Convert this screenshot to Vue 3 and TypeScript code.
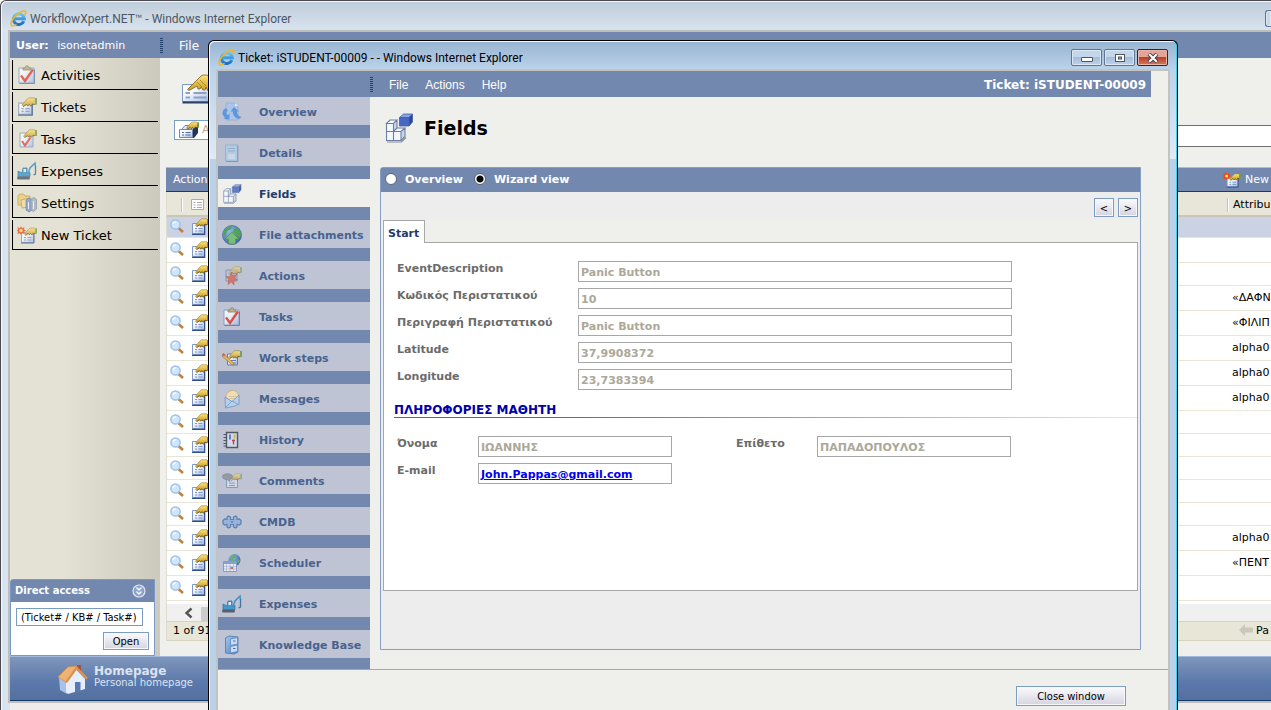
<script setup lang="ts">
import { ref } from 'vue'

interface NavItem {
  label: string
  icon: string
}

interface Field {
  id: string
  label: string
  value: string
}

interface TicketRow {
  attribute: string
  tall: boolean
}

const sideMenu: NavItem[] = [
  { label: 'Activities', icon: 'clipboard' },
  { label: 'Tickets', icon: 'ticket' },
  { label: 'Tasks', icon: 'task' },
  { label: 'Expenses', icon: 'excavator' },
  { label: 'Settings', icon: 'settings' },
  { label: 'New Ticket', icon: 'new-ticket' },
]

const ticketNav: NavItem[] = [
  { label: 'Overview', icon: 'overview' },
  { label: 'Details', icon: 'details' },
  { label: 'Fields', icon: 'cubes' },
  { label: 'File attachments', icon: 'globe' },
  { label: 'Actions', icon: 'actions' },
  { label: 'Tasks', icon: 'clipboard' },
  { label: 'Work steps', icon: 'steps' },
  { label: 'Messages', icon: 'message' },
  { label: 'History', icon: 'notebook' },
  { label: 'Comments', icon: 'comments' },
  { label: 'CMDB', icon: 'puzzle' },
  { label: 'Scheduler', icon: 'scheduler' },
  { label: 'Expenses', icon: 'excavator' },
  { label: 'Knowledge Base', icon: 'cabinet' },
]

const activeNav = ref('Fields')
const view = ref('wizard')
const directAccess = ref('(Ticket# / KB# / Task#)')

const eventFields: Field[] = [
  { id: 'event-description', label: 'EventDescription', value: 'Panic Button' },
  { id: 'event-code', label: 'Κωδικός Περιστατικού', value: '10' },
  { id: 'event-detail', label: 'Περιγραφή Περιστατικού', value: 'Panic Button' },
  { id: 'latitude', label: 'Latitude', value: '37,9908372' },
  { id: 'longitude', label: 'Longitude', value: '23,7383394' },
]

const rows: TicketRow[] = [
  { attribute: '', tall: false },
  { attribute: '', tall: true },
  { attribute: '', tall: false },
  { attribute: '«ΔΑΦΝ', tall: true },
  { attribute: '«ΦΙΛΙΠ', tall: true },
  { attribute: 'alpha0', tall: true },
  { attribute: 'alpha0', tall: true },
  { attribute: 'alpha0', tall: true },
  { attribute: '', tall: false },
  { attribute: '', tall: false },
  { attribute: '', tall: false },
  { attribute: '', tall: false },
  { attribute: '', tall: false },
  { attribute: 'alpha0', tall: true },
  { attribute: '«ΠΕΝΤ', tall: true },
  { attribute: '', tall: true },
]
</script>

<template>
  <svg class="sprite" width="0" height="0" aria-hidden="true">
    <defs>
      <linearGradient id="g-paper" x1="0" y1="0" x2="1" y2="1">
        <stop offset="0" stop-color="#ffffff" />
        <stop offset=".4" stop-color="#f2f6fd" />
        <stop offset="1" stop-color="#9fb6e2" />
      </linearGradient>
      <linearGradient id="g-hand" x1="0" y1="0" x2="0" y2="1">
        <stop offset="0" stop-color="#fbe27a" />
        <stop offset="1" stop-color="#c9971f" />
      </linearGradient>
      <linearGradient id="g-ie" x1="0" y1="0" x2="0" y2="1">
        <stop offset="0" stop-color="#6cc8f5" />
        <stop offset="1" stop-color="#1a6fc4" />
      </linearGradient>
      <radialGradient id="g-globe" cx=".35" cy=".3" r=".8">
        <stop offset="0" stop-color="#8ab8ea" />
        <stop offset="1" stop-color="#1f4f9c" />
      </radialGradient>
      <linearGradient id="g-blue" x1="0" y1="0" x2="1" y2="1">
        <stop offset="0" stop-color="#9cc6f2" />
        <stop offset="1" stop-color="#3c78c4" />
      </linearGradient>
    </defs>
    <symbol id="ie" viewBox="0 0 18 18">
      <path d="M14.6 11.8a5.700 5.700 0 1 1 .4-2.600H5.400" fill="none" stroke="url(#g-ie)" stroke-width="3.200" />
      <path d="M3.200 9.300h13" stroke="#3f9fe2" stroke-width="2.200" />
      <path d="M1.800 16.500C-.5 14.500 2.800 8 8.500 3.800 12.500.9 16.200.2 16.700 2c.2.900-.2 2-.9 3.200" fill="none" stroke="#f2b51c" stroke-width="1.700" stroke-linecap="round" />
      <path d="M1.800 16.500c.9.800 2.800.2 4.600-1" fill="none" stroke="#f2b51c" stroke-width="1.500" stroke-linecap="round" />
    </symbol>
    <symbol id="clipboard" viewBox="0 0 20 20">
      <path d="M2 3h15v15H2z" fill="url(#g-paper)" stroke="#8098c4" />
      <path d="M2.500 18.500h15v-14" fill="none" stroke="#5f79ac" />
      <path d="M6 5V3h2c0-3 4-3 4 0h2v2z" fill="#b7ac83" stroke="#857a55" stroke-width=".8" />
      <path d="M4 10.500l4 5.500L16 4.500" fill="none" stroke="#e03a2c" stroke-width="2.300" />
    </symbol>
    <symbol id="hand" viewBox="0 0 14 9">
      <path d="M.3 7.500L4 3 6.500 1H12v5.500l-2-.5-1.500 2-1.500-1-1.500 1-1-1.200L1.500 8.500z" fill="url(#g-hand)" />
      <path d="M.3 7.500L4 3 6.500.8H12" fill="none" stroke="#a88428" stroke-width=".7" />
      <path d="M1.500 8.700l3-2 1 1.300 1.500-1.200L8.500 8.200 10 6.300l2 .5" fill="none" stroke="#5b4716" stroke-width=".9" />
      <path d="M12 1h2v6h-2z" fill="#6f9c4a" />
    </symbol>
    <symbol id="ticket" viewBox="0 0 18 18">
      <path d="M1.500 5.500h12v10h-12z" fill="url(#g-paper)" stroke="#8098c6" />
      <path d="M1 16.300h12.700V6" fill="none" stroke="#304f88" stroke-width="1.200" />
      <path d="M4 10.500h2M7.500 10.500h4M4 13h2M7.500 13h4" stroke="#7f96c4" stroke-width="1.100" />
      <use href="#hand" x="4" y="0" width="14" height="9" />
    </symbol>
    <symbol id="big-ticket" viewBox="0 0 34 32">
      <path d="M1.500 10.500h29v17h-29z" fill="url(#g-paper)" stroke="#7f97c6" />
      <path d="M1.500 28.500h30V11" fill="none" stroke="#2b4068" stroke-width="1.800" />
      <path d="M4.500 19h4.500M12.500 19h13M4.500 23.500h4.500M12.500 23.500h13" stroke="#8ca0c8" stroke-width="1.800" />
      <path d="M7 15l8-8 5-5c3-2 7-1 14 2v14l-7-1-2-4-1 3h-2l-2-3-1 2h-2l-1-3-7 4c-2 .500-3-.300-2-1z" fill="url(#g-hand)" stroke="#8a6a1e" stroke-width=".9" />
      <path d="M16 8l5 5M19 6l6 6" fill="none" stroke="#a27d22" stroke-width=".8" />
    </symbol>
    <symbol id="task" viewBox="0 0 20 20">
      <path d="M3 4h13v14H3z" fill="url(#g-paper)" stroke="#8098c4" />
      <path d="M5 12l3 4.500 5.500-8" fill="none" stroke="#dd4433" stroke-width="2" />
      <use href="#hand" x="6" y="0" width="14" height="9" />
    </symbol>
    <symbol id="excavator" viewBox="0 0 20 20">
      <path d="M1 10l4 2 1-5h4v5l3-.500v4L1 16z" fill="#2f93cc" stroke="#1e5d8c" stroke-width=".7" />
      <path d="M6.500 8h2.500v3h-2.500z" fill="#e2f2fb" />
      <path d="M1.500 17h10" stroke="#44505c" stroke-width="3" stroke-linecap="round" />
      <path d="M11 12.500L13 7l5-5 .5 4" fill="none" stroke="#2a8ac8" stroke-width="1.500" />
      <path d="M18.500 5v8l-2 1" fill="none" stroke="#39648c" stroke-width="1.300" />
    </symbol>
    <symbol id="settings" viewBox="0 0 20 20">
      <path d="M1 3l1.500-2h4L8 3h5v9H1z" fill="#efcb75" stroke="#b98d39" stroke-width=".8" />
      <path d="M4 7l8-2v9l-7 1z" fill="#f7dd99" stroke="#b98d39" stroke-width=".8" />
      <path d="M9 7l3-2 3 2v10l-3 2-3-2z" fill="#7698d2" stroke="#43659f" stroke-width=".7" />
      <path d="M14 6l3-1.500 2.500 2V16l-3 2.500L14 17z" fill="#a4afc3" stroke="#667591" stroke-width=".7" />
      <path d="M11.500 9v7M16.500 8v8" stroke="#e9f0fa" />
    </symbol>
    <symbol id="new-ticket" viewBox="0 0 20 18">
      <path d="M4.500 6.500h12v10h-12z" fill="url(#g-paper)" stroke="#8098c6" />
      <path d="M4 17h13V7" fill="none" stroke="#304f88" />
      <path d="M7 11.500h2M10.500 11.500h4M7 14h2M10.500 14h4" stroke="#7f96c4" stroke-width="1.100" />
      <use href="#hand" x="7" y="1" width="13" height="9" />
      <path d="M4 0l1 2.200L7.500 1 7 3.500 9 4.500 7 5.600l.5 2.400L5 7.200 4 9 3 7.200.5 8 1 5.600-.5 4.500 1 3.500.5 1 3 2.200z" fill="#f0441c" />
      <circle cx="4" cy="4.500" r="1.800" fill="#ffdf45" />
    </symbol>
    <symbol id="search" viewBox="0 0 14 14">
      <path d="M8.500 9l4.500 4" stroke="#c0813e" stroke-width="2.600" />
      <circle cx="5.500" cy="5.500" r="4.600" fill="#cfe6fb" stroke="#9fc2ea" stroke-width="1.500" />
      <path d="M3 5a2.500 2.500 0 0 1 3-2" fill="none" stroke="#fff" stroke-width="1.200" />
    </symbol>
    <symbol id="overview" viewBox="0 0 20 20">
      <path d="M4 1h9l3 3v14H4z" fill="#a9c5ee" stroke="#8ba9d8" stroke-width=".8" />
      <path d="M13 1v3h3" fill="#e8f1fc" />
      <path d="M4 6C-.5 8.500-.5 13 3 15.500l-1.500 1.300 6 .8V11.500l-1.700 1.700C4 12 4 9.500 6 8.500z" fill="#4f91dc" />
      <path d="M12 5L8.500 9.500h2.300c0 3.500 2 6.500 6.200 7.500l2.700-2c-3.500-.800-4.800-3-4.800-5.500h2.100z" fill="#4f91dc" />
    </symbol>
    <symbol id="details" viewBox="0 0 20 20">
      <path d="M3.500 2h12v16h-12z" fill="#b0cde6" stroke="#92b0cc" />
      <path d="M6 5.500h7M6 8h7" stroke="#8fb0d0" stroke-width="1.200" />
      <path d="M6 11h7v5H6z" fill="#c9ddee" />
      <path d="M15.800 2.500v16H4" fill="none" stroke="#7393b6" />
    </symbol>
    <symbol id="cubes" viewBox="0 0 28 30">
      <path d="M1.500 10.500L5 7h7v8h8v8.500L16 27.500H1.500z" fill="#f3f7fc" />
      <path d="M8.500 10.500L12 7v8l-3.500 3.500zM16 18.500l4-3.500v8.500l-4 4z" fill="#c9d5e8" />
      <path d="M1.500 10.500L5 7h7L8.500 10.500zM1.500 10.500v17H16v-9H1.500M8.500 10.500v17M12 7v8l-3.500 3.500M12 15h8l-4 3.500M20 15v8.500l-4 4" fill="none" stroke="#6c80a6" stroke-width="1.100" />
      <path d="M2 29h14.500l4.500-4.500" fill="none" stroke="#858c99" stroke-width="1.200" />
      <path d="M14.500 4.500L18.500 1h9L24 4.500z" fill="#87a5e2" stroke="#4660a4" stroke-width=".8" />
      <path d="M24 4.500L27.500 1v8L24 13z" fill="#2a4693" stroke="#4660a4" stroke-width=".8" />
      <path d="M14.500 4.500H24V13h-9.500z" fill="#4668c4" stroke="#4660a4" stroke-width=".8" />
    </symbol>
    <symbol id="globe" viewBox="0 0 20 20">
      <circle cx="10" cy="10" r="9.500" fill="url(#g-globe)" stroke="#2c5c87" stroke-width=".7" />
      <path d="M2 6c2-3 5-5 8-5l-1 3-4 2-1 4-3 2zM13 2l5 4 1 4-2 3-3-4-3-2z" fill="#3f9e48" />
      <path d="M10 7l7 7h-3.500v4.500a9 9 0 0 1-7 0V14H3z" fill="#6fbc68" stroke="#3d8640" stroke-width=".7" />
    </symbol>
    <symbol id="actions" viewBox="0 0 20 20">
      <path d="M4 4h11v11H4z" fill="#b7c4dd" stroke="#7b8fb4" />
      <use href="#hand" x="6" y="0" width="14" height="9" opacity=".6" />
      <path d="M9.500 6l1.200 4 4-1.700-2 3.700 2.800 2-3.500.3L12 19l-2.500-3L6 18.500l.7-5L4 10.500l4 .3z" fill="#d96a55" stroke="#b14c3e" stroke-width=".5" />
    </symbol>
    <symbol id="steps" viewBox="0 0 20 18">
      <path d="M5.500 5h10v11h-10z" fill="url(#g-paper)" stroke="#55739f" />
      <path d="M9 11.500h5M9 14h5" stroke="#55739f" />
      <use href="#hand" x="6" y="1" width="14" height="9" />
      <path d="M1.500 5l10 9 .5 2-2.500-.5L0 7z" fill="#f0b53c" stroke="#8c642a" stroke-width=".6" />
      <path d="M0 5.500L1.500 4l2 1.700-1.700 1.800z" fill="#d55347" />
    </symbol>
    <symbol id="message" viewBox="0 0 20 20">
      <path d="M4 9c-1-5 4-8 7.500-7.500C15 2 17 4.500 16.500 9L10 13z" fill="#f6e3b4" stroke="#d2a868" />
      <path d="M6.500 7.500h8M7.500 9.500h6" stroke="#d9bd8d" stroke-width=".8" />
      <path d="M3 8l7 4.500L17 6v9l-4 2-9.500 2z" fill="#b5d4f2" stroke="#658fbd" stroke-width=".8" />
      <path d="M4 18l6-6 6.500 3.500" fill="none" stroke="#658fbd" stroke-width=".8" />
    </symbol>
    <symbol id="notebook" viewBox="0 0 20 20">
      <path d="M4.500 2.500h11v15h-11z" fill="#d8deeb" stroke="#3e4654" stroke-width="1.400" />
      <path d="M1.500 4.500H5M1.500 7.500H5M1.500 10.500H5M1.500 13.500H5M1.500 16H5" stroke="#3e4654" />
      <path d="M8 4.500v5" stroke="#4a66c6" stroke-width="1.800" />
      <path d="M12.500 4.500v4" stroke="#d0b32b" stroke-width="1.800" />
      <path d="M11.500 9.500v5M10 10.500h3" stroke="#b03349" stroke-width="1.400" />
    </symbol>
    <symbol id="comments" viewBox="0 0 20 18">
      <path d="M4.500 6h11v9.500h-11z" fill="#d3ddec" stroke="#7d94b8" />
      <path d="M7 11h6M7 13.500h6" stroke="#7d94b8" />
      <use href="#hand" x="8" y="1" width="12" height="8" opacity=".65" />
      <path d="M.5 4.500C.5 1 10 .5 10.500 4.500 10.500 6.500 7.500 7.300 7.500 7.300L8 9.500 5 7.500C2.500 7.500.5 6.500.5 4.500z" fill="#8e949d" stroke="#6e747e" stroke-width=".6" />
    </symbol>
    <symbol id="puzzle" viewBox="0 0 20 16">
      <path d="M5 5.500V3l1.500-1L8.500 3v2.500h3V3l2-1 1.500 1v2.500L17.500 5 19 6.500v3L17.500 11 15 10.500V13l-1.500 1-2-1v-2.500h-3V13l-2 1L5 13v-2.500L2.500 11 1 9.500v-3L2.500 5z" fill="#8fb1de" stroke="#4b73a8" stroke-width="1.200" />
      <path d="M9 7h2v2H9z" fill="#5c83b8" />
    </symbol>
    <symbol id="scheduler" viewBox="0 0 20 20">
      <circle cx="12.500" cy="7" r="6" fill="url(#g-globe)" />
      <path d="M8 5c1-3 5-4.500 7-3l-2 3-2 1v4zM15 6l3 1-2 4z" fill="#57ac57" />
      <path d="M1.500 8.500h13v10h-13z" fill="#eef2fb" stroke="#7992c4" />
      <path d="M1.500 8.500h13V11h-13z" fill="#7f9bd2" />
      <path d="M4.500 11v7M8 11v7M11.500 11v7M2 13.500h12M2 16h12" stroke="#a5b6db" stroke-width=".8" />
      <path d="M8.500 14h2.500v2H8.500z" fill="#db5a4f" />
    </symbol>
    <symbol id="cabinet" viewBox="0 0 20 20">
      <path d="M3.500 3L7 1l9 1v15l-4 2-8.500-1z" fill="url(#g-blue)" stroke="#356cb0" stroke-width=".8" />
      <path d="M8.500 4l7-1.500V9l-7 1.500zM8.500 11.500l7-1.500v6.500l-7 1.500z" fill="#cfe1f7" stroke="#4d7fc2" stroke-width=".8" />
      <path d="M11 6h2.500M11 13.500h2.500" stroke="#355f9d" stroke-width="1.200" />
    </symbol>
    <symbol id="house" viewBox="0 0 32 32">
      <path d="M20 2h4v9h-4z" fill="#a4504a" />
      <path d="M2 14l8 4v13l-7-4z" fill="#a9c1e6" />
      <path d="M9 19l10-13 9 10v10l-17 5-2-2z" fill="#e6eefb" />
      <path d="M1 14L11 4l9-1-11 16z" fill="#efb273" stroke="#d08e49" stroke-width=".7" />
      <path d="M19.500 3L31 15l-2 1.500L19.500 7 10 20l-2-1z" fill="#d99350" />
      <path d="M18 19h5.500v9L18 29.500z" fill="#5778b3" />
    </symbol>
    <symbol id="stack" viewBox="0 0 22 18">
      <path d="M15 8l5-5v9l-4 5H6v-2h9z" fill="#26344f" />
      <path d="M3.500 8.500L7 4.500h10L14.500 8.500z" fill="#dfe8f7" stroke="#6f87b5" />
      <path d="M1.500 8.500h13v8h-13z" fill="url(#g-paper)" stroke="#6f87b5" />
      <path d="M4 11.500h2M7.500 11.500h5M4 14h2M7.500 14h5" stroke="#526b9c" />
      <use href="#hand" x="8" y="0" width="13" height="9" />
    </symbol>
  </svg>

  <div class="desktop">
    <div class="outer">
      <div class="titlebar">
        <svg class="ie"><use href="#ie" /></svg>
        <span>WorkflowXpert.NET™ - Windows Internet Explorer</span>
        <button class="caption-btn edge" type="button" aria-label="Minimize"></button>
      </div>

      <div class="outer-client">
        <header class="userbar">
          <p class="user"><b>User:</b> isonetadmin</p>
          <span class="grip"></span>
          <a class="outer-file" href="#">File</a>
        </header>

        <div class="outer-body">
          <aside class="sidebar">
            <nav class="side-menu">
              <a v-for="item in sideMenu" :key="item.label" href="#">
                <svg><use :href="'#' + item.icon" /></svg>{{ item.label }}
              </a>
            </nav>
            <section class="direct">
              <h2>
                <label for="direct-access">Direct access</label>
                <svg viewBox="0 0 14 14">
                  <circle cx="7" cy="7" r="6" fill="#8da2c8" stroke="#dfe7f4" stroke-width="1.200" />
                  <path d="M4.500 3.500L7 6l2.500-2.500M4.500 7.500L7 10l2.500-2.500" fill="none" stroke="#fff" stroke-width="1.300" />
                </svg>
              </h2>
              <div class="direct-body">
                <input id="direct-access" v-model="directAccess" type="text" />
                <button class="btn open" type="button">Open</button>
              </div>
            </section>
          </aside>

          <main class="workspace">
            <svg class="big-icon"><use href="#big-ticket" /></svg>
            <div class="filters">
              <button class="scope" type="button"><svg><use href="#stack" /></svg>All</button>
              <input class="search" type="text" aria-label="Search" />
            </div>
            <section class="grid">
              <div class="grid-bar">
                <span>Action</span>
                <button type="button"><svg><use href="#new-ticket" /></svg>New</button>
              </div>
              <table>
                <thead>
                  <tr>
                    <th class="c-view"><i></i></th>
                    <th class="c-edit">
                      <svg viewBox="0 0 14 12">
                        <path d="M.5.500h12v10H.5z" fill="#fff" stroke="#aaa" />
                        <path d="M2.500 3.500h2M6 3.500h5M2.500 6h2M6 6h5M2.500 8.500h2M6 8.500h5" stroke="#aaa" />
                      </svg>
                    </th>
                    <th></th>
                    <th class="c-attr"><i></i>Attribu</th>
                  </tr>
                </thead>
                <tbody>
                  <tr v-for="(row, i) in rows" :key="i" :class="{ tall: row.tall, selected: i === 0 }">
                    <td class="c-view"><svg><use href="#search" /></svg></td>
                    <td class="c-edit"><svg><use href="#ticket" /></svg></td>
                    <td></td>
                    <td class="c-attr">{{ row.attribute }}</td>
                  </tr>
                </tbody>
              </table>
              <div class="hscroll">
                <svg viewBox="0 0 10 12"><path d="M8 1.500L3 6l5 4.500" fill="none" stroke="#555" stroke-width="2.400" /></svg>
                <span></span>
              </div>
              <div class="grid-foot">
                <span>1 of 91</span>
                <span class="page">
                  <svg viewBox="0 0 14 12"><path d="M0 6l6-6v3.500h8v5H6V12z" fill="#c9c8bb" /></svg>Pa
                </span>
              </div>
            </section>
          </main>
        </div>

        <footer class="homebar">
          <svg><use href="#house" /></svg>
          <p><b>Homepage</b>Personal homepage</p>
        </footer>
      </div>
      <div class="statusbar"></div>
    </div>

    <div class="dialog" role="dialog" aria-label="Ticket: iSTUDENT-00009">
      <div class="titlebar">
        <svg class="ie"><use href="#ie" /></svg>
        <span>Ticket: iSTUDENT-00009 - - Windows Internet Explorer</span>
        <div class="captions">
          <button class="caption-btn" type="button" aria-label="Minimize">
            <svg viewBox="0 0 12 10"><rect x=".5" y="4.500" width="11" height="4" rx=".5" fill="#fff" stroke="#50545e" /></svg>
          </button>
          <button class="caption-btn" type="button" aria-label="Maximize">
            <svg viewBox="0 0 12 10">
              <rect x="1.500" y="1.500" width="9" height="7" fill="#fff" stroke="#50545e" />
              <rect x="4.500" y="4" width="3" height="2" fill="#8fa8c8" stroke="#50545e" />
            </svg>
          </button>
          <button class="caption-btn close" type="button" aria-label="Close">
            <svg viewBox="0 0 12 10">
              <path d="M2 1l8 8M10 1L2 9" stroke="#44424c" stroke-width="4" />
              <path d="M2.300 1.300l7.400 7.400M9.700 1.300L2.300 8.700" stroke="#fff" stroke-width="2" />
            </svg>
          </button>
        </div>
      </div>

      <div class="client">
        <header class="menubar">
          <span class="grip"></span>
          <nav><a href="#">File</a><a href="#">Actions</a><a href="#">Help</a></nav>
          <b>Ticket: iSTUDENT-00009</b>
        </header>

        <div class="dialog-body">
          <nav class="rail">
            <a
              v-for="item in ticketNav"
              :key="item.label"
              href="#"
              :class="{ active: item.label === activeNav }"
              @click.prevent="activeNav = item.label"
            >
              <svg><use :href="'#' + item.icon" /></svg>{{ item.label }}
            </a>
          </nav>

          <main class="page-main">
            <h1><svg><use href="#cubes" /></svg>Fields</h1>
            <section class="panel">
              <div class="view-switch">
                <label><input v-model="view" type="radio" name="view" value="overview" />Overview</label>
                <label><input v-model="view" type="radio" name="view" value="wizard" />Wizard view</label>
              </div>
              <div class="pager">
                <button class="btn" type="button">&lt;</button>
                <button class="btn" type="button">&gt;</button>
              </div>
              <div class="tabs" role="tablist">
                <button type="button" role="tab" aria-selected="true">Start</button>
              </div>
              <div class="tab-panel" role="tabpanel">
                <div class="fields">
                  <div v-for="field in eventFields" :key="field.id" class="field wide">
                    <label :for="field.id">{{ field.label }}</label>
                    <input :id="field.id" type="text" :value="field.value" disabled />
                  </div>
                </div>
                <h2>ΠΛΗΡΟΦΟΡΙΕΣ ΜΑΘΗΤΗ</h2>
                <div class="student">
                  <div class="fields">
                    <div class="field">
                      <label for="first-name">Όνομα</label>
                      <input id="first-name" type="text" value="ΙΩΑΝΝΗΣ" disabled />
                    </div>
                    <div class="field">
                      <span id="mail-label" class="label">E-mail</span>
                      <div class="mail-box">
                        <a href="mailto:John.Pappas@gmail.com" aria-describedby="mail-label">John.Pappas@gmail.com</a>
                      </div>
                    </div>
                  </div>
                  <div class="fields">
                    <div class="field">
                      <label for="last-name">Επίθετο</label>
                      <input id="last-name" type="text" value="ΠΑΠΑΔΟΠΟΥΛΟΣ" disabled />
                    </div>
                  </div>
                </div>
              </div>
            </section>
          </main>
        </div>

        <footer class="dialog-foot">
          <button class="btn" type="button">Close window</button>
        </footer>
      </div>
    </div>
  </div>
</template>

<style>
body {
  margin: 0;
}
</style>

<style scoped>
* {
  box-sizing: border-box;
}
.sprite {
  position: absolute;
}
.desktop {
  position: relative;
  min-height: 100vh;
  display: flex;
  overflow: hidden;
  font: 11px/14px 'DejaVu Sans', Verdana, sans-serif;
  color: #000;
}
a {
  color: inherit;
  text-decoration: none;
}
h1,
h2,
p {
  margin: 0;
}
button,
input {
  font: inherit;
  color: inherit;
  margin: 0;
}
button {
  cursor: pointer;
}
svg {
  display: block;
  flex: none;
}

/* Window frames */
.outer {
  flex: 1;
  min-width: 0;
  display: flex;
  flex-direction: column;
  padding-left: 7px;
  border: solid #4a4a4e;
  border-width: 1px 0 0 1px;
  border-top-left-radius: 6px;
  background: linear-gradient(#bfccda, #d8e4f0 30px);
  box-shadow: inset 1px 1px 0 #f4f8fc;
}
.titlebar {
  display: flex;
  align-items: center;
  gap: 3px;
  font: 12px/16px Roboto, 'Open Sans', sans-serif;
}
.outer > .titlebar {
  height: 29px;
  padding: 6px 0 0 2px;
  color: #4d5661;
}
.ie {
  width: 17px;
  height: 17px;
}
.outer-client {
  flex: 1;
  display: flex;
  flex-direction: column;
  border: 2px solid #bebdba;
  border-right: 0;
  background: #eff0eb;
}
.caption-btn {
  width: 31px;
  height: 17px;
  padding: 0;
  display: grid;
  place-items: center;
  border: 1px solid #5f7590;
  border-radius: 2px;
  background: linear-gradient(#c4d6ea 45%, #a3bddb 50%, #bdd3ea);
  box-shadow: inset 0 0 0 1px #dbe7f3;
}
.caption-btn svg {
  width: 12px;
  height: 10px;
}
.caption-btn.close {
  border-color: #52181c;
  background: linear-gradient(#e2a597 45%, #b93f27 50%, #d27b62);
  box-shadow: inset 0 0 0 1px #e6b3a6;
}
.caption-btn.edge {
  width: 6px;
  margin-left: auto;
  border-right: 0;
  border-radius: 3px 0 0 3px;
  background: #cbd8e5;
}
.statusbar {
  height: 7px;
  margin-left: 2px;
  background: #f0ecec;
}

/* Application header */
.userbar {
  height: 26px;
  flex: none;
  display: flex;
  align-items: center;
  background: #7388ae;
  color: #fff;
}
.user {
  width: 150px;
  padding: 1px 0 0 6px;
}
.user b {
  margin-right: 5px;
}
.grip {
  width: 3px;
  height: 15px;
  background: repeating-linear-gradient(#24406c 0 1px, #7388ae 1px 2px);
}
.outer-file {
  margin-left: 16px;
  padding-top: 1px;
  font-size: 12px;
}
.outer-body {
  flex: 1;
  display: flex;
  min-height: 0;
}

/* Left sidebar */
.sidebar {
  width: 150px;
  flex: none;
  display: flex;
  flex-direction: column;
  justify-content: space-between;
  background: linear-gradient(90deg, #e4e2d5 35%, #cccabd);
}
.side-menu {
  display: grid;
  gap: 2px;
  padding: 2px 2px 0;
}
.side-menu a {
  height: 30px;
  display: flex;
  align-items: center;
  gap: 4px;
  padding: 2px 0 0 4px;
  border: solid #000;
  border-width: 0 0 1px 1px;
  font-size: 13px;
}
.side-menu svg {
  width: 20px;
  height: 20px;
  margin-bottom: 2px;
  opacity: 0.75;
}
.direct {
  width: 145px;
  border: 1px solid #7b98c8;
  border-top-left-radius: 3px;
  background: #fff;
}
.direct h2 {
  height: 22px;
  display: flex;
  align-items: center;
  justify-content: space-between;
  padding: 0 8px 0 4px;
  background: #7388ae;
  color: #fff;
  font-size: 10px;
}
.direct h2 svg {
  width: 14px;
  height: 14px;
}
.direct-body {
  display: grid;
  gap: 6px;
  padding: 6px 5px 5px;
  font-family: 'DejaVu Sans Condensed', 'DejaVu Sans', sans-serif;
}
.direct-body input {
  width: 127px;
  height: 18px;
  padding: 0 4px;
  border: 1px solid #7a9cc0;
  background: #fff;
}
.btn {
  padding: 0;
  border: 1px solid #7c9cc0;
  background: linear-gradient(#fbfbfd, #d5d4e0);
  box-shadow: inset 0 0 0 1px #f6f7fa;
  font-family: 'DejaVu Sans Condensed', 'DejaVu Sans', sans-serif;
}
.open {
  width: 46px;
  height: 18px;
  padding-top: 1px;
  justify-self: end;
}

/* Ticket list behind the dialog */
.workspace {
  flex: 1;
  min-width: 0;
  padding: 16px 0 0 6px;
}
.big-icon {
  width: 34px;
  height: 32px;
  margin-left: 15px;
}
.filters {
  height: 61px;
  display: flex;
  gap: 20px;
  padding: 14px 0 0 8px;
}
.scope {
  width: 240px;
  height: 20px;
  display: flex;
  align-items: center;
  gap: 2px;
  padding: 0 3px;
  border: 1px solid #7c9cc0;
  background: #fff;
  color: #b9a795;
}
.scope svg {
  width: 22px;
  height: 18px;
}
.search {
  flex: 1;
  height: 22px;
  margin-top: 5px;
  border: solid #6e6e6e;
  border-width: 1px 0;
  background: #fff;
}
.grid {
  border-left: 1px solid #dddccf;
}
.grid-bar {
  height: 25px;
  display: flex;
  align-items: center;
  justify-content: space-between;
  margin-left: -1px;
  padding: 1px 0 0 7px;
  border-top: 1px solid #a6bddf;
  border-bottom: 1px solid #123a70;
  background: #7388ae;
  color: #fff;
}
.grid-bar button {
  width: 48px;
  display: flex;
  align-items: center;
  gap: 4px;
  padding: 0;
  border: 0;
  background: none;
}
.grid-bar svg {
  width: 18px;
  height: 16px;
}
table {
  width: 100%;
  table-layout: fixed;
  border-collapse: collapse;
  background: #fff;
}
th {
  height: 24px;
  padding: 2px 0 0;
  border-bottom: 2px solid #c9c6b8;
  background: #e8e6d8;
  font-weight: normal;
  text-align: left;
}
th i {
  display: inline-block;
  width: 2px;
  height: 14px;
  margin-right: 4px;
  vertical-align: middle;
  background: linear-gradient(90deg, #c5c3b5 50%, #fff 50%);
}
.c-view {
  width: 24px;
}
.c-edit {
  width: 30px;
}
.c-attr {
  width: 44px;
  white-space: nowrap;
}
th.c-view {
  padding-left: 14px;
}
th svg {
  width: 14px;
  height: 12px;
}
td {
  height: 23px;
  padding: 0;
  border-bottom: 1px solid #e9e6d8;
}
.tall td {
  height: 25px;
}
.selected td {
  height: 21px;
  background: #cad2e4;
}
td.c-attr {
  padding-left: 5px;
}
td.c-view {
  padding: 0 0 2px 3px;
}
td.c-view svg {
  width: 14px;
  height: 14px;
}
td.c-edit svg {
  width: 18px;
  height: 18px;
}
.hscroll {
  height: 20px;
  display: flex;
  padding: 3px 0 0 16px;
  gap: 7px;
  background: #f0f0f0;
  border-top: 3px solid #fff;
}
.hscroll svg {
  width: 11px;
  height: 12px;
}
.hscroll span {
  width: 300px;
  height: 14px;
  background: #cdcdcd;
}
.grid-foot {
  height: 20px;
  display: flex;
  align-items: center;
  justify-content: space-between;
  padding-left: 6px;
  border: solid #d6d3bf;
  border-width: 1px 0;
  background: #e8e6d6;
}
.page {
  width: 32px;
  display: flex;
  gap: 3px;
}
.page svg {
  width: 14px;
  height: 12px;
}
.homebar {
  height: 45px;
  flex: none;
  display: flex;
  align-items: center;
  gap: 5px;
  padding-left: 47px;
  border-top: 1px solid #9fb8dc;
  border-bottom: 1px solid #123a70;
  background: linear-gradient(#7f96bb, #5a78ab 60%, #54709f);
  color: #dde3f0;
}
.homebar svg {
  width: 32px;
  height: 32px;
}
.homebar p {
  margin-bottom: 3px;
  font-size: 10px;
  line-height: 12px;
}
.homebar b {
  display: block;
  font-size: 12px;
}

/* Ticket dialog */
.dialog {
  position: absolute;
  inset: 40px 93px 0 208px;
  display: flex;
  flex-direction: column;
  padding: 0 7px;
  border: 1px solid #000;
  border-bottom: 0;
  border-radius: 6px 6px 0 0;
  background: linear-gradient(#98b4d1, #bad2ea 28px, #dfeaf5 118px, #bad1ea 118px);
  box-shadow:
    inset 1px 1px 0 #f0f7fd,
    inset -1px 0 0 #3ed0ec;
}
.dialog > .titlebar {
  height: 28px;
  padding: 5px 2px 0;
}
.captions {
  display: flex;
  gap: 2px;
  margin-left: auto;
}
.client {
  flex: 1;
  display: flex;
  flex-direction: column;
  border: 2px solid #c3c3c0;
  border-bottom: 0;
  background: #eff0eb;
}
.menubar {
  height: 26px;
  flex: none;
  display: flex;
  align-items: center;
  margin-right: 17px;
  padding: 0 5px 0 152px;
  background: #7388ae;
  color: #fff;
}
.menubar nav {
  display: flex;
  gap: 17px;
  margin: 0 auto 0 16px;
  padding-top: 2px;
  font: 12px/16px 'Liberation Sans', Arial, sans-serif;
}
.menubar b {
  padding-top: 1px;
  font-size: 12px;
}
.dialog-body {
  flex: none;
  display: flex;
  border-bottom: 1px solid #a9a99c;
}
.rail {
  width: 152px;
  flex: none;
  display: grid;
  gap: 13px;
  padding-bottom: 11px;
  background: #7388ae;
}
.rail a {
  height: 28px;
  display: flex;
  align-items: center;
  gap: 17px;
  padding: 4px 0 0 4px;
  background: #bec4d3;
  color: #48628f;
  font-weight: bold;
  white-space: nowrap;
}
.rail svg {
  width: 20px;
  height: 20px;
  margin-bottom: 2px;
  opacity: 0.85;
}
.rail .active {
  background: #eff0eb;
  color: #213c6d;
}
.page-main {
  flex: 1;
  display: flex;
  flex-direction: column;
  padding: 0 27px 19px 10px;
}
h1 {
  height: 70px;
  display: flex;
  align-items: center;
  gap: 11px;
  padding: 0 0 8px 5px;
  font-size: 19px;
  line-height: 24px;
}
h1 svg {
  width: 28px;
  height: 30px;
}
.panel {
  flex: 1;
  display: flex;
  flex-direction: column;
  padding-bottom: 58px;
  border: 1px solid #869dc6;
  border-top-left-radius: 3px;
  background: #ededed;
}
.view-switch {
  height: 24px;
  display: flex;
  gap: 11px;
  padding-left: 4px;
  background: #7388ae;
  color: #fff;
  font-weight: bold;
}
.view-switch label {
  display: flex;
  align-items: center;
}
.view-switch input {
  appearance: none;
  width: 12px;
  height: 12px;
  margin: 0 8px 3px 0;
  border: 1px solid #5d6473;
  border-radius: 50%;
  background: #fff;
}
.view-switch input:checked {
  background: radial-gradient(#000 0 3px, #fff 4px);
}
.pager {
  height: 28px;
  display: flex;
  justify-content: flex-end;
  gap: 4px;
  padding: 6px 2px 0;
}
.pager .btn {
  width: 20px;
  height: 19px;
  padding-top: 2px;
}
.tabs {
  display: flex;
  padding-left: 2px;
  background: #eff0eb;
}
.tabs button {
  height: 23px;
  margin-bottom: -1px;
  padding: 3px 5px 0 4px;
  border: 1px solid #a7a7a7;
  border-bottom: 0;
  background: #fff;
  color: #213c6d;
  font-weight: bold;
  position: relative;
}
.tab-panel {
  flex: 1;
  margin: 0 2px;
  padding: 18px 0 0 13px;
  border: 1px solid #a7a7a7;
  background: #fff;
  font-weight: bold;
}
.fields {
  display: grid;
  gap: 6px;
  align-content: start;
}
.field {
  display: grid;
  grid-template-columns: 81px 194px;
}
.field.wide {
  grid-template-columns: 181px minmax(0, 434px);
}
.field label,
.label {
  padding-top: 1px;
  color: #6b6b6b;
}
.field input,
.mail-box {
  width: 100%;
  height: 21px;
  padding: 1px 2px 0;
  border: 1px solid #a7a7a7;
  background: #fff;
  color: #aca899;
  line-height: 19px;
}
.mail-box a {
  color: #00e;
  text-decoration: underline;
}
.tab-panel h2 {
  margin: 14px 0 18px -3px;
  border-bottom: 1px solid;
  border-image: linear-gradient(90deg, #666 20%, #e8e8e8) 1;
  color: #00a;
  font-size: 12px;
  line-height: 13px;
}
.student {
  display: flex;
  gap: 64px;
}
.dialog-foot {
  display: flex;
  justify-content: flex-end;
  padding: 16px 42px 0 0;
}
.dialog-foot .btn {
  width: 110px;
  height: 20px;
  padding-top: 1px;
}
</style>
